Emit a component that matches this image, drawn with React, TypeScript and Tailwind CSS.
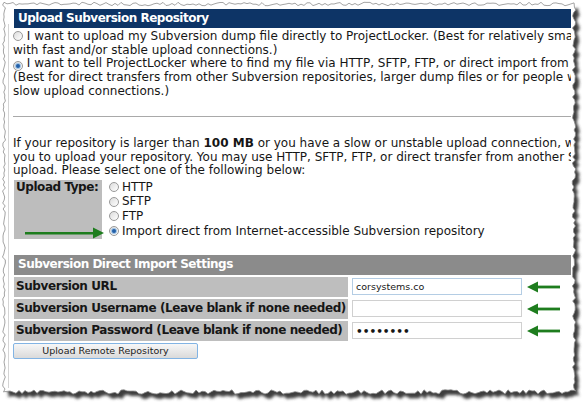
import React from "react"

// small seeded generator so the torn edge looks the same on every render
function rng(seed: number) {
  let s = seed
  return () => {
    s = (s * 16807) % 2147483647
    return s / 2147483647
  }
}

function tornPath() {
  const r = rng(11)
  const pts: [number, number][] = []
  const L = 4, T = 4, R = 574, B = 392
  for (let x = L; x <= R; x += 3) pts.push([x, T + (r() - 0.5) * 3.4])
  for (let y = T; y <= B; y += 3) pts.push([R + (r() - 0.5) * 3.4, y])
  for (let x = R; x >= L; x -= 3) pts.push([x, B + (r() - 0.5) * 4.5])
  for (let y = B; y >= T; y -= 3) pts.push([L + (r() - 0.5) * 3, y])
  return "M" + pts.map((p) => p[0].toFixed(1) + "," + p[1].toFixed(1)).join("L") + "Z"
}

function Radio({ checked }: { checked?: boolean }) {
  return (
    <span className="inline-flex w-[10px] h-[10px] rounded-full border border-[#999] bg-linear-to-br from-[#dcdcdc] to-white items-center justify-center align-[-1px]">
      {checked && <span className="w-[4px] h-[4px] rounded-full bg-[#2460a8] ring-1 ring-[#9fc3e6]" />}
    </span>
  )
}

function LeftArrow() {
  return (
    <svg width="33" height="12" viewBox="0 0 33 12" className="ml-[5px] shrink-0">
      <path d="M10 4.6H33V7.4H10Z" fill="#1e7d1e" />
      <path d="M0 6L11 0.5V11.5Z" fill="#1e7d1e" />
    </svg>
  )
}

const fields = [
  { label: "Subversion URL", value: "corsystems.co", type: "text", focus: true },
  { label: "Subversion Username (Leave blank if none needed)", value: "", type: "text" },
  { label: "Subversion Password (Leave blank if none needed)", value: "password", type: "password" },
]

export default function App() {
  const paper = tornPath()

  return (
    <div className="relative w-[584px] h-[406px] overflow-hidden bg-white font-['DejaVu_Sans',sans-serif] text-[12px] leading-[13.5px] text-[#161616]">
      <div className="w-[571px] pl-[13px] pt-[9px] whitespace-nowrap overflow-hidden">
        {/* page header */}
        <div className="ml-px h-[19px] bg-[#0d3466] pl-[4px] flex items-center text-white font-bold tracking-[-0.5px]">
          Upload Subversion Repository
        </div>

        {/* upload method */}
        <div className="mt-[2px]">
          <Radio /> I want to upload my Subversion dump file directly to ProjectLocker. (Best for relatively small repositories or for people
          <br />
          with fast and/or stable upload connections.)
          <br />
          <Radio checked /> I want to tell ProjectLocker where to find my file via HTTP, SFTP, FTP, or direct import from another
          <br />
          (Best for direct transfers from other Subversion repositories, larger dump files or for people with
          <br />
          slow upload connections.)
        </div>

        <div className="mt-[18px] h-px bg-[#a9a9a9]" />

        <p className="mt-[20px]">
          If your repository is larger than <b>100 MB</b> or you have a slow or unstable upload connection, we recommend
          <br />
          you to upload your repository. You may use HTTP, SFTP, FTP, or direct transfer from another Subversion
          <br />
          upload. Please select one of the following below:
        </p>

        {/* upload type */}
        <div className="relative mt-[2px] ml-px flex">
          <div className="w-[88px] h-[59px] bg-[#bdbdbd] pl-[2px] pt-px font-bold tracking-[-0.45px]">Upload Type:</div>
          <div className="pl-[7px] flex flex-col leading-[14.75px]">
            {["HTTP", "SFTP", "FTP", "Import direct from Internet-accessible Subversion repository"].map((t, i) => (
              <div key={t} className="flex items-center gap-[3px]">
                <Radio checked={i === 3} />
                <span>{t}</span>
              </div>
            ))}
          </div>
          <svg width="80" height="12" viewBox="0 0 80 12" className="absolute left-[11px] top-[47px]">
            <path d="M0 5H70V7.4H0Z" fill="#1e7d1e" />
            <path d="M79 6L68 0.5V11.5Z" fill="#1e7d1e" />
          </svg>
        </div>

        {/* direct import settings */}
        <div className="mt-[16px] ml-px flex flex-col gap-[2px]">
          <div className="h-[20px] bg-[#8b8b8b] pl-[4px] flex items-center text-white font-bold tracking-[-0.5px]">
            Subversion Direct Import Settings
          </div>
          {fields.map((f) => (
            <div key={f.label} className="flex h-[20px]">
              <div className="w-[334px] bg-[#bebebe] pl-[2px] flex items-center font-bold tracking-[-0.42px]">{f.label}</div>
              <div className="pl-[4px] flex items-center">
                <input
                  readOnly
                  type={f.type}
                  value={f.value}
                  className={`w-[170px] h-[17px] border bg-white px-[3px] outline-none ${
                    f.focus ? "border-[#b4cde4]" : "border-[#d0d0d0]"
                  } ${f.type === "password" ? "text-[10.5px] font-bold" : "text-[9.5px]"}`}
                />
                <LeftArrow />
              </div>
            </div>
          ))}
        </div>

        <button className="mt-[2px] w-[185px] h-[16px] rounded-[2px] border border-[#82b4e4] bg-linear-to-b from-[#f7f7f7] to-[#dadada] text-[9.5px] leading-[14px] text-[#222]">
          Upload Remote Repository
        </button>
      </div>

      {/* torn paper edge */}
      <svg width="584" height="406" className="absolute inset-0 pointer-events-none">
        <defs>
          <filter id="soft" x="-5%" y="-5%" width="110%" height="110%">
            <feGaussianBlur stdDeviation="1.6" />
          </filter>
          <mask id="outside">
            <rect width="584" height="406" fill="white" />
            <path d={paper} fill="black" />
          </mask>
        </defs>
        <path d={`M0,0H584V406H0Z ${paper}`} fill="white" fillRule="evenodd" />
        <g mask="url(#outside)">
          <path d={paper} transform="translate(4 5)" fill="#3c3c3c" filter="url(#soft)" />
        </g>
        <path d={paper} fill="none" stroke="#8d8d8d" strokeWidth="0.8" />
        <path d="M8.5 24V388" stroke="#d4d4d4" strokeWidth="1" />
      </svg>
    </div>
  )
}
